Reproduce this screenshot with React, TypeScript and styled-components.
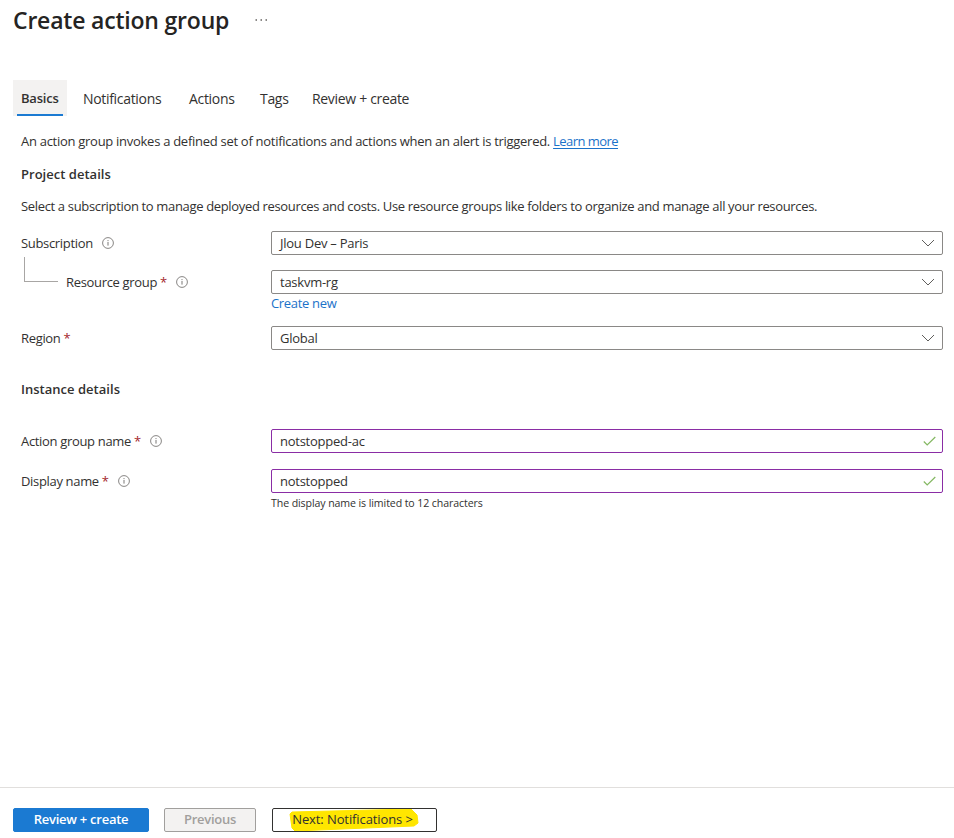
import React from "react";
import styled, { createGlobalStyle } from "styled-components";

const Global = createGlobalStyle`
  html, body { margin: 0; padding: 0; background: #fff; }
  body { font-family: "Open Sans", "Noto Sans", "Liberation Sans", sans-serif; font-size: 13px; color: #323130; }
`;

const Page = styled.div`
  width: 954px; height: 838px; display: flex; flex-direction: column; overflow: hidden;
`;
const Main = styled.main`flex: 1; display: flex; flex-direction: column; min-height: 0;`;
const Header = styled.header`
  display: flex; align-items: center; height: 40px; padding-left: 13px; gap: 26px;
`;
const Title = styled.h1`
  margin: 0; font-size: 23px; font-weight: 600; color: #252423; letter-spacing: -0.2px; line-height: 40px;
`;
const More = styled.svg`margin-top: -1px;`;
const Tabs = styled.nav`
  display: flex; gap: 8px; margin: 40px 0 0 13px; height: 36px;
`;
const Tab = styled.div<{ $active?: boolean; $w: number }>`
  position: relative; width: ${p => p.$w}px; display: flex; align-items: center; padding-left: 8px; box-sizing: border-box;
  white-space: nowrap;
  font-size: ${p => (p.$active ? 13 : 14)}px;
  letter-spacing: ${p => (p.$active ? "-0.2px" : "-0.32px")};
  font-weight: ${p => (p.$active ? 600 : 400)};
  background: ${p => (p.$active ? "#f3f2f1" : "transparent")};
  &::after {
    content: ""; display: ${p => (p.$active ? "block" : "none")}; position: absolute; left: 4px; right: 4px; bottom: 0; height: 2px; background: #1b7ad2;
  }
`;
const Body = styled.div`padding: 0 11px 0 21px; display: flex; flex-direction: column;`;
const Intro = styled.p`margin: 16px 0 0; line-height: 18px; letter-spacing: -0.28px; white-space: nowrap;`;
const Link = styled.a`color: #1b72c9; letter-spacing: -0.55px; text-decoration: underline; text-underline-offset: 2px;`;
const Section = styled.h2<{ $top: number }>`
  margin: ${p => p.$top}px 0 0; font-size: 13px; line-height: 18px; font-weight: 600; letter-spacing: 0.02px; color: #323130;
`;
const Desc = styled.p`margin: 14px 0 0; line-height: 18px; letter-spacing: -0.34px; white-space: nowrap;`;
const Row = styled.div<{ $top: number }>`
  position: relative; display: grid; grid-template-columns: 250px 672px; margin-top: ${p => p.$top}px;
`;
const LabelWrap = styled.div<{ $indent?: boolean }>`
  display: flex; align-items: center; height: 24px; padding-left: ${p => (p.$indent ? 45 : 0)}px; letter-spacing: -0.33px; white-space: nowrap;
`;
const Star = styled.span`color: #a4262c; margin-left: 3px;`;
const Info = styled.svg`margin-left: 9px; flex: none;`;
const Tree = styled.span`
  position: absolute; left: 3px; top: -13px; width: 33px; height: 24px; border-left: 1px solid #a8a6a4; border-bottom: 1px solid #a8a6a4;
`;
const Field = styled.div<{ $valid?: boolean }>`
  box-sizing: border-box; height: 24px; display: flex; align-items: center; justify-content: space-between;
  padding: 0 6px 0 8px; border-radius: 2px; background: #fff; letter-spacing: -0.25px;
  border: 1px solid ${p => (p.$valid ? "#8a2da5" : "#8a8886")};
`;
const ChevronIcon = styled.svg`margin-right: 1px;`;
const Under = styled.div`font-size: 13px; line-height: 18px; letter-spacing: -0.33px; color: #1b72c9;`;
const Hint = styled.div`font-size: 10.6px; line-height: 14px; margin-top: 3px; color: #323130; letter-spacing: -0.1px;`;
const Footer = styled.footer`
  box-sizing: border-box; height: 51px; border-top: 1px solid #e1dfdd; display: flex; align-items: flex-start; padding: 20px 0 0 13px;
`;
const Btn = styled.button<{ $kind: "primary" | "disabled" | "outline"; $w: number; $gap?: number }>`
  box-sizing: border-box; position: relative; width: ${p => p.$w}px; height: 24px; margin-right: ${p => p.$gap ?? 0}px; padding: 0 0 2px;
  font-family: inherit; font-size: 13px; font-weight: 600; letter-spacing: -0.25px; border-radius: 2px; display: flex; align-items: center; justify-content: center;
  ${p => p.$kind === "primary" && "background:#1b7ad2;border:1px solid #1b7ad2;color:#fff;"}
  ${p => p.$kind === "disabled" && "background:#f3f2f1;border:1px solid #a19f9d;color:#a19f9d;"}
  ${p => p.$kind === "outline" && "background:#fff;border:1px solid #323130;color:#323130;font-weight:400;letter-spacing:-0.1px;"}
`;
const Mark = styled.svg`position: absolute; left: 16px; top: 0; `;
const BtnText = styled.span`position: relative; margin-left: -4px;`;

const InfoIcon = () => (
  <Info width="12" height="12" viewBox="0 0 12 12" fill="none">
    <circle cx="6" cy="6" r="5.4" stroke="#7a7876" strokeWidth="0.9" />
    <rect x="5.5" y="5" width="1" height="3.6" fill="#7a7876" />
    <rect x="5.5" y="3.1" width="1" height="1" fill="#7a7876" />
  </Info>
);
const Chevron = () => (
  <ChevronIcon width="14" height="8" viewBox="0 0 14 8" fill="none">
    <path d="M1 1l6 6 6-6" stroke="#605e5c" strokeWidth="1" />
  </ChevronIcon>
);
const Check = () => (
  <svg width="13" height="10" viewBox="0 0 13 10" fill="none">
    <path d="M.8 5.5l3.4 3.4L12.3 1" stroke="#84b862" strokeWidth="1.2" />
  </svg>
);

export default function App() {
  return (
    <Page>
      <Global />
      <Main>
        <Header>
          <Title>Create action group</Title>
          <More width="12" height="2" viewBox="0 0 12 2" fill="#8a8886">
            <rect x="0.5" width="1.5" height="2" />
            <rect x="5.5" width="1.5" height="2" />
            <rect x="10.5" width="1.5" height="2" />
          </More>
        </Header>
        <Tabs>
          <Tab $active $w={54}>Basics</Tab>
          <Tab $w={98}>Notifications</Tab>
          <Tab $w={63}>Actions</Tab>
          <Tab $w={44}>Tags</Tab>
          <Tab $w={114}>Review + create</Tab>
        </Tabs>
        <Body>
          <Intro>An action group invokes a defined set of notifications and actions when an alert is triggered. <Link>Learn more</Link></Intro>
          <Section $top={15}>Project details</Section>
          <Desc>Select a subscription to manage deployed resources and costs. Use resource groups like folders to organize and manage all your resources.</Desc>
          <Row $top={16}>
            <LabelWrap>Subscription<InfoIcon /></LabelWrap>
            <Field>Jlou Dev – Paris<Chevron /></Field>
          </Row>
          <Row $top={15}>
            <Tree />
            <LabelWrap $indent>Resource group<Star>*</Star><InfoIcon /></LabelWrap>
            <div>
              <Field>taskvm-rg<Chevron /></Field>
              <Under>Create new</Under>
            </div>
          </Row>
          <Row $top={14}>
            <LabelWrap>Region<Star>*</Star></LabelWrap>
            <Field>Global<Chevron /></Field>
          </Row>
          <Section $top={30}>Instance details</Section>
          <Row $top={31}>
            <LabelWrap>Action group name<Star>*</Star><InfoIcon /></LabelWrap>
            <Field $valid>notstopped-ac<Check /></Field>
          </Row>
          <Row $top={16}>
            <LabelWrap>Display name<Star>*</Star><InfoIcon /></LabelWrap>
            <div>
              <Field $valid>notstopped<Check /></Field>
              <Hint>The display name is limited to 12 characters</Hint>
            </div>
          </Row>
        </Body>
      </Main>
      <Footer>
        <Btn $kind="primary" $w={136} $gap={15}>Review + create</Btn>
        <Btn $kind="disabled" $w={92} $gap={16}>Previous</Btn>
        <Btn $kind="outline" $w={165}>
          <Mark width="130" height="22" viewBox="0 0 130 22">
            <path d="M1 5 L3 3 L122 0 L128 6 L129 14 L125 17 L6 22 L3 19 Z" fill="#ffe600" stroke="#ffe600" strokeLinejoin="round" strokeWidth="1" />
          </Mark>
          <BtnText>Next: Notifications &gt;</BtnText>
        </Btn>
      </Footer>
    </Page>
  );
}
